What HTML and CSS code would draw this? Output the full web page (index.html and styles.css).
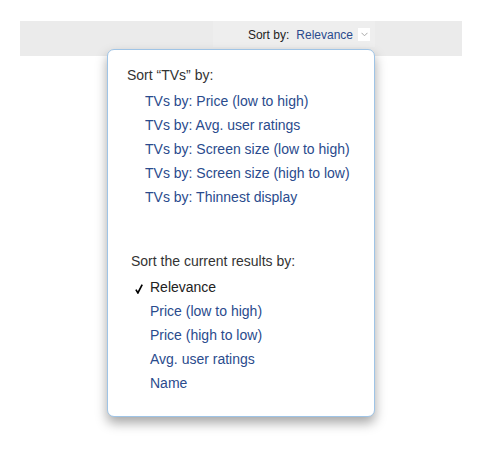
FILE: index.html
```html
<!DOCTYPE html>
<html>
<head>
<meta charset="utf-8">
<link rel="stylesheet" href="styles.css">
</head>
<body>
<div class="toolbar">
  <div class="sort-box">
    <span class="sort-label">Sort by:</span>
    <span class="sort-value">Relevance</span>
    <span class="sort-arrow"><svg width="7" height="5" viewBox="0 0 7 5"><polyline points="0.5,0.8 3.5,3.8 6.5,0.8" fill="none" stroke="#a9a9a9" stroke-width="1"/></svg></span>
  </div>
</div>

<div class="menu">
  <div class="menu-head">Sort “TVs” by:</div>
  <ul class="menu-list tv-list">
    <li>TVs by: Price (low to high)</li>
    <li>TVs by: Avg. user ratings</li>
    <li>TVs by: Screen size (low to high)</li>
    <li>TVs by: Screen size (high to low)</li>
    <li>TVs by: Thinnest display</li>
  </ul>
  <div class="menu-head second">Sort the current results by:</div>
  <ul class="menu-list cur-list">
    <li class="selected"><svg class="check" width="8" height="10" viewBox="0 0 8 10"><path d="M0.9 5.6 L2.9 8.9 L7.2 0.6" fill="none" stroke="#000" stroke-width="1.7" stroke-linejoin="miter" stroke-linecap="butt"/></svg>Relevance</li>
    <li>Price (low to high)</li>
    <li>Price (high to low)</li>
    <li>Avg. user ratings</li>
    <li>Name</li>
  </ul>
</div>
</body>
</html>
```

FILE: styles.css
```css
html, body {
  margin: 0;
  padding: 0;
  background: #ffffff;
  font-family: "Liberation Sans", Arial, sans-serif;
}

.toolbar {
  margin: 21px 20px 0 20px;
  height: 35px;
  background: #ebebeb;
  display: flex;
}

.sort-box {
  margin-left: 193px;
  width: 162px;
  height: 26px;
  background: #eeeeee;
  display: flex;
  align-items: center;
  justify-content: flex-end;
  padding-right: 5px;
  box-sizing: border-box;
  font-size: 12px;
  padding-top: 1px;
}

.sort-label {
  color: #222222;
}

.sort-value {
  color: #2a4b8d;
  margin-left: 7px;
}

.sort-arrow {
  margin-left: 5px;
  width: 12px;
  height: 13px;
  background: #ffffff;
  display: flex;
  align-items: center;
  justify-content: center;
}

.menu {
  position: absolute;
  left: 107px;
  top: 49px;
  background: #ffffff;
  border: 1px solid #9fc4e6;
  border-radius: 7px;
  box-shadow: 0 6px 12px rgba(0, 0, 0, 0.35);
  padding: 13px 0 21px 19px;
  box-sizing: content-box;
  width: 247px;
  font-size: 14px;
  line-height: 24px;
}

.menu-head {
  color: #333333;
  margin-bottom: 2px;
}

.menu-head.second {
  margin-top: 40px;
  padding-left: 4px;
}

.menu-list {
  list-style: none;
  margin: 0;
  padding: 0;
}

.menu-list li {
  color: #2a4b8d;
}

.tv-list {
  padding-left: 18px;
}

.cur-list {
  padding-left: 23px;
}

.menu-list li.selected {
  color: #222222;
}

.check {
  display: inline-block;
  margin-left: -15px;
  margin-right: 7px;
  vertical-align: -2px;
}
```
